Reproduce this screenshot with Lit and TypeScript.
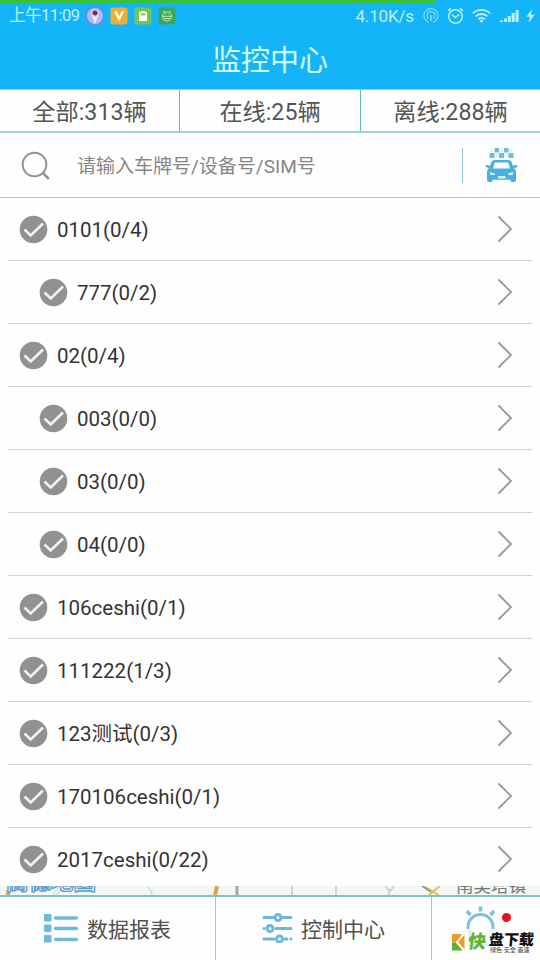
import { LitElement, html, css } from "lit";
import { customElement } from "lit/decorators.js";
import { classMap } from "lit/directives/class-map.js";

interface Group { name: string; child?: boolean; }

const GROUPS: Group[] = [
  { name: "0101(0/4)" },
  { name: "777(0/2)", child: true },
  { name: "02(0/4)" },
  { name: "003(0/0)", child: true },
  { name: "03(0/0)", child: true },
  { name: "04(0/0)", child: true },
  { name: "106ceshi(0/1)" },
  { name: "111222(1/3)" },
  { name: "123测试(0/3)" },
  { name: "170106ceshi(0/1)" },
  { name: "2017ceshi(0/22)" },
];

@customElement("status-bar")
class StatusBar extends LitElement {
  static styles = css`
    :host { display: block; height: 30px; position: relative; color: #b9f3ff; }
    .progress { position: absolute; left: 0; top: 0; width: 436px; height: 3px; background: #3bc136; }
    .bar { display: flex; align-items: center; height: 30px; box-sizing: border-box; padding: 1px 5px 0 9px; }
    .time { font-size: 16.500px; line-height: 20px; letter-spacing: -.5px; width: 77px; white-space: nowrap; }
    .apps { display: flex; gap: 6px; }
    .speed { font-size: 17px; line-height: 20px; margin-left: auto; margin-right: 9px; letter-spacing: -.15px; white-space: nowrap; }
    svg { display: block; flex: none; }
    .ring { margin-right: 8px; }
    .alarm { margin-right: 8px; }
    .wifi { margin-right: 9px; }
    .signal { margin-right: 7px; }
  `;
  render() {
    return html`
      <div class="progress"></div>
      <div class="bar">
        <span class="time">上午11:09</span>
        <div class="apps">
          <svg width="18" height="18" viewBox="0 0 18 18">
            <rect width="18" height="18" rx="5" fill="#5b8fe0" />
            <circle cx="9" cy="9" r="8" fill="#a9bdf3" />
            <path d="M9 17L5.500 8h7z" fill="#e8ecff" />
            <circle cx="9" cy="6" r="3.800" fill="#e3c7e2" /><circle cx="9" cy="6" r="2" fill="#a31f55" stroke="#6d1449" stroke-width="1" />
          </svg>
          <svg width="18" height="18" viewBox="0 0 18 18">
            <rect x=".5" y=".5" width="17" height="17" rx="3" fill="#efad35" />
            <path d="M4.500 5h2l2.800 6L12 5h2M5 5l4.200 8L13 5" fill="none" stroke="#fff4dc" stroke-width="1.500" />
          </svg>
          <svg width="18" height="18" viewBox="0 0 18 18">
            <rect x=".5" y=".5" width="17" height="17" rx="3" fill="#74c653" />
            <path d="M7 4h4v1h2v9H5V5h2z" fill="#fff" /><path d="M6.500 6.200h5v2.300h-5z" fill="#8bcf6e" />
          </svg>
          <svg width="18" height="18" viewBox="0 0 18 18">
            <rect x=".5" y=".5" width="17" height="17" rx="3" fill="#37a85d" />
            <path d="M9 5c-3 0-4.500 2-4.500 4.500S6.200 14 9 14s4.500-2 4.500-4.500S12 5 9 5zM4.500 9.300h9M6 11.500h6M6.500 5.500L5.500 3.500M11.500 5.500l1-2M7 7.300h.8M10.200 7.300h.8" fill="none" stroke="#b9eeb0" stroke-width="1" />
          </svg>
        </div>
        <span class="speed">4.10K/s</span>
        <svg class="ring" width="16" height="17" viewBox="0 0 16 17" fill="none" stroke="#7fdcfb" stroke-width="1.200">
          <path d="M5.800 15.200a7 7 0 1 1 4.400 0" /><path d="M5.500 11.800a4 4 0 1 1 5 0" /><path d="M8 8v6" stroke-width="1.500" />
        </svg>
        <svg class="alarm" width="17" height="18" viewBox="0 0 16 17" fill="none" stroke="currentColor" stroke-width="1.400">
          <circle cx="8" cy="9" r="6.400" /><path d="M4.800 7.500L8 10l3.500-3M1 3.600L3.800 1.300M15 3.600l-2.800-2.300" />
        </svg>
        <svg class="wifi" width="19" height="15" viewBox="0 0 19 15" fill="none" stroke="currentColor" stroke-width="1.900">
          <path d="M.8 5.400a12.500 12.500 0 0 1 17.400 0M3.600 8.400a8.500 8.500 0 0 1 11.800 0M6.300 11.200a4.600 4.600 0 0 1 6.400 0" /><circle cx="9.500" cy="13" r="1.500" fill="currentColor" stroke="none" />
        </svg>
        <svg class="signal" width="19" height="14" viewBox="0 0 19 14" fill="currentColor">
          <path d="M0 11.500h3V13H0zM4 9.500h3V13H4zM7.800 7h3v6h-3zM11.700 4h3v9h-3zM15.600 1h3v12h-3z" />
        </svg>
        <svg width="9" height="14" viewBox="0 0 9 14"><path d="M6 0L.5 7.800h3.400L2.500 14 8.700 5.700H5z" fill="currentColor" /></svg>
      </div>`;
  }
}

@customElement("group-row")
class GroupRow extends LitElement {
  static properties = { group: { attribute: false } };
  declare group: Group;
  static styles = css`
    :host { display: block; margin: 0 8px; height: 62px; border-bottom: 1px solid #d2d2d2; }
    .row { display: flex; align-items: center; height: 62px; padding: 0 19px 0 11px; }
    .child { padding-left: 31px; }
    .name { flex: 1; margin-left: 9px; padding-top: 2px; font-size: 20.500px; line-height: 24px; color: #333; white-space: nowrap; }
    svg { display: block; flex: none; }
  `;
  render() {
    return html`<div class=${classMap({ row: true, child: !!this.group.child })}>
      <svg width="29" height="29" viewBox="0 0 29 29"><circle cx="14.500" cy="14.500" r="13.800" fill="#919191" /><path d="M5.500 14.500l6.200 6L24 8.500" fill="none" stroke="#f2f2f2" stroke-width="2.600" /></svg>
      <span class="name">${this.group.name}</span>
      <svg width="16" height="28" viewBox="0 0 16 28"><path d="M1.500 1.500L14 14 1.500 26.500" fill="none" stroke="#999" stroke-width="1.900" /></svg>
    </div>`;
  }
}

@customElement("app-root")
class AppRoot extends LitElement {
  static styles = css`
    :host {
      display: flex; flex-direction: column; width: 540px; height: 960px; overflow: hidden;
      background: #fefefe; font-family: Roboto, "Noto Sans CJK SC", sans-serif; color: #444;
    }
    svg { display: block; flex: none; }
    .top { flex: none; height: 89px; background: #14b4f9; }
    .title { height: 59px; line-height: 63px; text-align: center; color: #d2fbff; font-size: 29px; }
    .stats { flex: none; display: grid; grid-template-columns: 179px 181px 180px; height: 41px; border-top: 1px solid #7fd3ee; border-bottom: 2px solid #a5d3da; }
    .stat { display: flex; align-items: center; justify-content: center; font-size: 23.200px; line-height: 28px; color: #555; padding-top: 3px; box-sizing: border-box; white-space: nowrap; }
    .stat + .stat { border-left: 1px solid #5fb7cc; }
    .search { flex: none; display: flex; align-items: center; height: 65px; border-bottom: 1px solid #8fd0dd; box-sizing: border-box; padding: 0 20px 0 21px; }
    .lens { margin-top: 2px; }
    .hint { margin-left: 26px; margin-top: 3px; flex: 1; font-size: 19px; line-height: 24px; color: #858585; white-space: nowrap; }
    .bar { width: 1px; height: 35px; background: #8dc7da; margin-right: 21px; }
    .list { flex: none; height: 688px; overflow: hidden; }
    .map { flex: none; height: 9px; overflow: hidden; background: #f2f6f5; display: flex; position: relative; }
    .map svg { position: absolute; left: 0; top: 0; }
    .brand, .town { position: absolute; white-space: nowrap; }
    .brand { left: 6px; bottom: 1px; font-size: 22.500px; line-height: 26px; font-weight: 700; color: #f2f6f5; -webkit-text-stroke: 1.300px #5e9bcb; }
    .town { left: 456px; bottom: -2px; font-size: 17.500px; line-height: 22px; color: #777; }
    .tabs { flex: none; display: grid; grid-template-columns: 215px 216px 109px; height: 65px; border-top: 2px solid #7fc1d1; box-sizing: border-box; }
    .tab { display: flex; align-items: center; font-size: 21px; line-height: 26px; color: #505050; white-space: nowrap; box-sizing: border-box; }
    .tab + .tab { border-left: 1px solid #bbb; }
    .label { padding-top: 2px; }
    .reports { padding-left: 43px; gap: 9px; }
    .control { padding-left: 46px; gap: 8px; }
    .glyph { margin-top: -2px; }
    .alert { position: relative; }
    .lamp { position: absolute; left: 33px; top: 8px; }
    .dot { position: absolute; left: 70px; top: 16px; width: 9px; height: 9px; border-radius: 50%; background: #e3131b; }
    .mark { position: absolute; left: 20px; top: 37px; }
    .kuai, .pan, .slogan { position: absolute; }
    .kuai { left: 36px; top: 34px; color: #62b52e; font-size: 18px; line-height: 22px; font-weight: 900; transform: skewX(-8deg); }
    .pan { left: 57px; top: 33px; color: #111; font-size: 15px; line-height: 20px; font-weight: 900; transform: skewX(-5deg); }
    .slogan { left: 58px; top: 49px; color: #555; font-size: 6px; line-height: 8px; font-weight: 500; }
  `;
  render() {
    return html`
      <div class="top"><status-bar></status-bar><div class="title">监控中心</div></div>
      <div class="stats">
        <div class="stat">全部:313辆</div><div class="stat">在线:25辆</div><div class="stat">离线:288辆</div>
      </div>
      <div class="search">
        <svg class="lens" width="30" height="30" viewBox="0 0 30 30" fill="none" stroke="#919191" stroke-width="2"><circle cx="13.500" cy="13.500" r="11.800" /><path d="M21.800 21.800l6 6" stroke-width="2.500" /></svg>
        <span class="hint">请输入车牌号/设备号/SIM号</span>
        <span class="bar"></span>
        <svg class="taxi" width="36" height="36" viewBox="0 0 36 36">
          <path fill="#74bcdb" d="M10.500 1h4.500v4.500h-4.500zM20 1h4.500v4.500H20zM5.500 6h5v5h-5zM15 6h5v5h-5zM24.500 6h5v5h-5z" />
          <path fill="#e3f5fa" d="M6 1.500h3.500v4H6zM15.500 1.500H19v4h-3.500zM25 1.500h3.500v4H25zM11 6.500h3.500v4H11zM20.500 6.500H24v4h-3.500z" />
          <path fill="#48b0df" fill-rule="evenodd" d="M10.500 13h14q2.500 0 3.300 2.500l1 3.300 3-.8q1.700 0 1.700 1.200T32 20.500l-2 .5q2 1.500 2 4V33q0 2-2 2h-2q-1.500 0-1.500-1.500v-.8h-18v.8Q8.500 35 7 35H5q-2 0-2-2v-8q0-2.500 2-4l-2-.5q-1.500-.2-1.500-1.300T3.200 18l3 .8 1-3.300Q8 13 10.500 13zM10.800 15.500L9 21.500h17l-1.800-6z" />
          <path d="M5.500 25l5.500 1.500-.5 1.500H6.500zM29.500 25L24 26.500l.5 1.500h4zM14 29h7.500v2.500H14z" fill="#d9f3fc" />
        </svg>
      </div>
      <div class="list">${GROUPS.map((g) => html`<group-row .group=${g}></group-row>`)}</div>
      <div class="map">
        <svg width="540" height="9" viewBox="0 0 540 9" fill="none">
          <path d="M8 4v5M215 9l2-9" stroke="#dda34d" stroke-width="4" />
          <path d="M237 0v9" stroke="#a5a5a5" stroke-width="3" />
          <path d="M53 9l6-9M57 9l6-9M147 1q5 2 5 8" stroke="#b4d6dc" stroke-width="1" />
          <path d="M292 0v9M336 0v9M385 0l5 5 4-5M389 9V4" stroke="#d2d2d2" stroke-width="2" />
          <path d="M423 0l16 9M429 9l11-9" stroke="#d9c458" stroke-width="2" /><path d="M422 0l9 6" stroke="#888" stroke-width="1.500" />
        </svg>
        <span class="brand">高德地图</span><span class="town">南吴塔镇</span>
      </div>
      <div class="tabs">
        <div class="tab reports">
          <svg class="glyph" width="35" height="30" viewBox="0 0 35 30" fill="#6db8df"><rect x="1" y="1" width="7.500" height="7.500" rx="1" /><rect x="1" y="11.500" width="7.500" height="7.500" rx="1" /><rect x="1" y="22" width="7.500" height="7.500" rx="1" /><path d="M12.500 5h21M12.500 15.500h21M12.500 26.500h21" stroke="#6db8df" stroke-width="3.300" stroke-linecap="round" /></svg>
          <span class="label">数据报表</span>
        </div>
        <div class="tab control">
          <svg class="glyph" width="31" height="30" viewBox="0 0 31 30" fill="none" stroke="#6db8df" stroke-width="3" stroke-linecap="round"><path d="M2 4.500h9M21 4.500h8M2 15.500h.1M14 15.500h15M2 26h10M23 26h2M29 26h.1" /><circle cx="16" cy="4.500" r="3" /><circle cx="8" cy="15.500" r="3" /><circle cx="17.500" cy="26" r="3" /></svg>
          <span class="label">控制中心</span>
        </div>
        <div class="tab alert">
          <svg class="lamp" width="32" height="44" viewBox="0 0 32 44" fill="none" stroke="#7dbfdf"><path d="M3 24v-2a12.500 12.500 0 0 1 25 0v2" stroke-width="3" /><path d="M15.500 1.500v5M2 6l3.500 4M29 6l-3.500 4" stroke-width="3.500" /><path d="M5 25v15h22V25" stroke="#d9edfb" stroke-width="3" /></svg>
          <span class="dot"></span>
          <svg class="mark" width="14" height="17" viewBox="0 0 14 17"><path d="M0 0h12.500L5 8.500H0z" fill="#f59b20" /><path d="M0 8.500h5l7.500 8H0z" fill="#65af30" /><path d="M12.500 1v15L5 8.500z" fill="#f29a28" /><path d="M11.500 0L5 8.500l7 8" fill="none" stroke="#fff" stroke-width="2" /></svg>
          <span class="kuai">快</span><span class="pan">盘下载</span><span class="slogan">绿色·安全·高速</span>
        </div>
      </div>`;
  }
}
